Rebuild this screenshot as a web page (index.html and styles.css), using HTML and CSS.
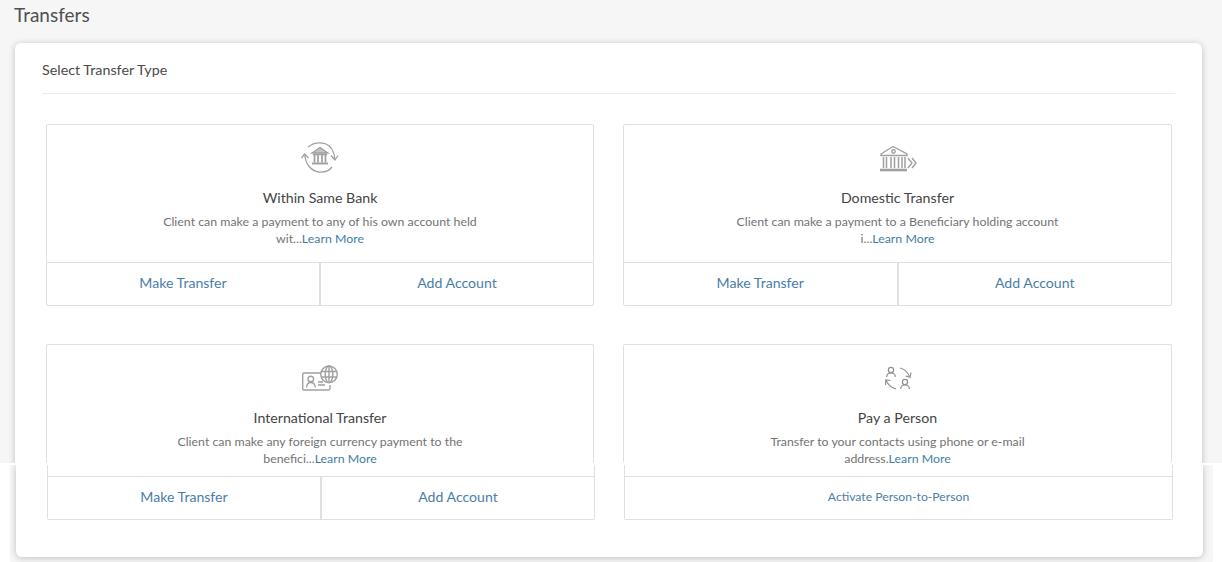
FILE: index.html
```html
<!DOCTYPE html>
<html lang="en">
<head>
<meta charset="utf-8">
<title>Transfers</title>
<link rel="stylesheet" href="styles.css">
</head>
<body>
<section class="upper">
  <h1 class="page-title">Transfers</h1>
  <div class="panel panel-top">
    <h2 class="panel-title">Select Transfer Type</h2>
    <div class="card-grid">
      <article class="card">
        <div class="card-body">
          <svg class="icon" viewBox="0 0 40 36" fill="none" stroke="#a0a0a0" stroke-width="1.300">
            <path d="M8 7 C13 3 20 2 26 4 C31 6 34 12 35 19"/><path d="M31 15.500 L35 20 L38 15.500"/>
            <path d="M1.500 18 L4.500 14 L8.500 18"/>
            <path d="M4.800 15 C5.500 24 11 31 19 32 C24 32.500 29 31 32 27"/>
            <path d="M12 13 L20 7.500 L28 13 Z" fill="#c4c4c4"/>
            <path d="M13 14.500 H27 M14.500 15 V22.500 M18 15 V22.500 M22 15 V22.500 M25.500 15 V22.500" stroke-width="1.700"/>
            <path d="M12 23.500 H28" stroke-width="2"/>
          </svg>
          <h3 class="card-title">Within Same Bank</h3>
          <p class="card-text">Client can make a payment to any of his own account held<br>wit...<a class="learn">Learn More</a></p>
        </div>
        <div class="card-actions"><a class="action">Make Transfer</a><a class="action">Add Account</a></div>
      </article>
      <article class="card">
        <div class="card-body">
          <svg class="icon" viewBox="0 0 40 36" fill="none" stroke="#a0a0a0" stroke-width="1.400">
            <path d="M3 14 L15 6.500 L29 14 V15.500 H3 Z"/>
            <circle cx="15.500" cy="11.500" r="1.700"/>
            <path d="M5.500 17 V28 M8.500 17 V28 M13 17 V28 M16.500 17 V28 M20.500 17 V28 M24 17 V28 M27 17 V28" stroke-width="1.500"/>
            <path d="M2 30 H29" stroke-width="2.600"/>
            <path d="M30 18 L34 23 L30 28 M34 18 L38 23 L34 28"/>
          </svg>
          <h3 class="card-title">Domestic Transfer</h3>
          <p class="card-text">Client can make a payment to a Beneficiary holding account<br>i...<a class="learn">Learn More</a></p>
        </div>
        <div class="card-actions"><a class="action">Make Transfer</a><a class="action">Add Account</a></div>
      </article>
      <article class="card card-cut">
        <div class="card-body">
          <svg class="icon" viewBox="0 0 40 36" fill="none" stroke="#a0a0a0" stroke-width="1.400">
            <path d="M22 13 H4 Q2.700 13 2.700 14.300 V28.700 Q2.700 30 4 30 H28.500 Q30 30 30 28.500 V25"/>
            <circle cx="10.800" cy="19" r="2.800"/>
            <path d="M6.700 27.500 C6.700 23.500 8.500 22.500 10.800 22.500 C13 22.500 15 23.500 15.300 27.500"/>
            <path d="M18 22 H23 M18 25 H25"/>
            <circle cx="29" cy="14.300" r="8.300" fill="#fff"/>
            <ellipse cx="29" cy="14.300" rx="3.800" ry="8.300"/>
            <path d="M29 6 V22.600 M21.500 11.500 H36.500 M21.500 17 H36.500"/>
          </svg>
          <h3 class="card-title">International Transfer</h3>
          <p class="card-text">Client can make any foreign currency payment to the<br>benefici...<a class="learn">Learn More</a></p>
        </div>
      </article>
      <article class="card card-cut">
        <div class="card-body">
          <svg class="icon" viewBox="0 0 40 36" fill="none" stroke="#8f8f8f" stroke-width="1.200">
            <circle cx="13" cy="10" r="2.600"/>
            <path d="M8.700 17 C8.700 14 10.500 13 13 13 C15.500 13 17.300 14 17.300 17"/>
            <circle cx="27" cy="22" r="2.600"/>
            <path d="M22.700 29 C22.700 26 24.500 25 27 25 C29.500 25 31.300 26 31.300 29"/>
            <path d="M22 8 C26 9 29.500 12 31.500 16.500"/><path d="M27.500 16 L32 17.200 L33 12.500"/>
            <path d="M18 29 C14 28 10.500 25.500 8 20.500"/><path d="M7.500 25 L7.800 20 L12.500 20.500"/>
          </svg>
          <h3 class="card-title">Pay a Person</h3>
          <p class="card-text">Transfer to your contacts using phone or e-mail<br>address.<a class="learn">Learn More</a></p>
        </div>
      </article>
    </div>
  </div>
</section>
<div class="seam"></div>
<section class="lower">
  <div class="panel panel-bottom">
    <div class="card-grid card-grid-lower">
      <div class="card-tail">
        <div class="card-actions"><a class="action">Make Transfer</a><a class="action">Add Account</a></div>
      </div>
      <div class="card-tail">
        <div class="card-actions"><a class="action action-small">Activate Person-to-Person</a></div>
      </div>
    </div>
  </div>
</section>
</body>
</html>
```
FILE: styles.css
```css
* { box-sizing: border-box; }
html, body { margin: 0; padding: 0; background: #fff; }
body {
  width: 1222px;
  height: 562px;
  overflow: hidden;
  font-family: "Lato", "Noto Sans", sans-serif;
  color: #444;
}
.upper {
  height: 463px;
  background: #f6f6f6;
  padding: 0 20px 0 15px;
}
.page-title {
  margin: 0 0 13px -1px;
  font-size: 19px;
  line-height: 29px;
  height: 30px;
  font-weight: 400;
  color: #505050;
}
.panel {
  width: 1187px;
  background: #fff;
  box-shadow: 0 1px 7px rgba(0, 0, 0, .22);
}
.panel-top {
  border-radius: 6px 6px 0 0;
  padding: 0 27px;
  height: 430px;
}
.panel-title {
  margin: 0;
  padding: 17px 0 13px;
  font-size: 14.300px;
  line-height: 20px;
  font-weight: 400;
  color: #4a4a4a;
  border-bottom: 1px solid #ebebeb;
}
.card-grid {
  display: grid;
  grid-template-columns: 548px 549px;
  column-gap: 29px;
  row-gap: 38px;
  margin: 30px 0 0 4px;
}
.card {
  border: 1px solid #e0e0e0;
  border-radius: 2px;
  background: #fff;
}
.card-cut {
  height: 119px;
  border-bottom: 0;
}
.card-body {
  height: 137px;
  padding-top: 15px;
  text-align: center;
}
.icon {
  display: block;
  width: 40px;
  height: 36px;
  margin: 0 auto;
}
.card-title {
  margin: 12px 0 0;
  font-size: 14.200px;
  line-height: 20px;
  font-weight: 400;
  color: #444;
}
.card-text {
  margin: 5px 0 0;
  font-size: 12.350px;
  line-height: 17px;
  color: #737373;
}
.learn { color: #3f7da6; }
.card-actions {
  display: flex;
  height: 43px;
  border-top: 1px solid #e0e0e0;
}
.action {
  flex: 1 1 0;
  text-align: center;
  font-size: 14.100px;
  line-height: 39px;
  color: #4a7ea8;
}
.action + .action { border-left: 2px solid #e0e0e0; }
.action-small { font-size: 12.200px; }
.seam { height: 2px; background: #fff; }
.lower {
  height: 97px;
  margin: 0 9px 0 10px;
  padding-left: 6px;
  background: #f6f6f6;
  overflow: hidden;
}
.panel-bottom {
  height: 92px;
  padding-left: 31px;
  border-radius: 0 0 6px 6px;
}
.card-grid-lower { margin: 0; }
.card-tail {
  height: 55px;
  padding-top: 11px;
  border: 1px solid #e0e0e0;
  border-top: 0;
  border-radius: 0 0 2px 2px;
}
.card-tail .card-actions { height: 43px; }
```
